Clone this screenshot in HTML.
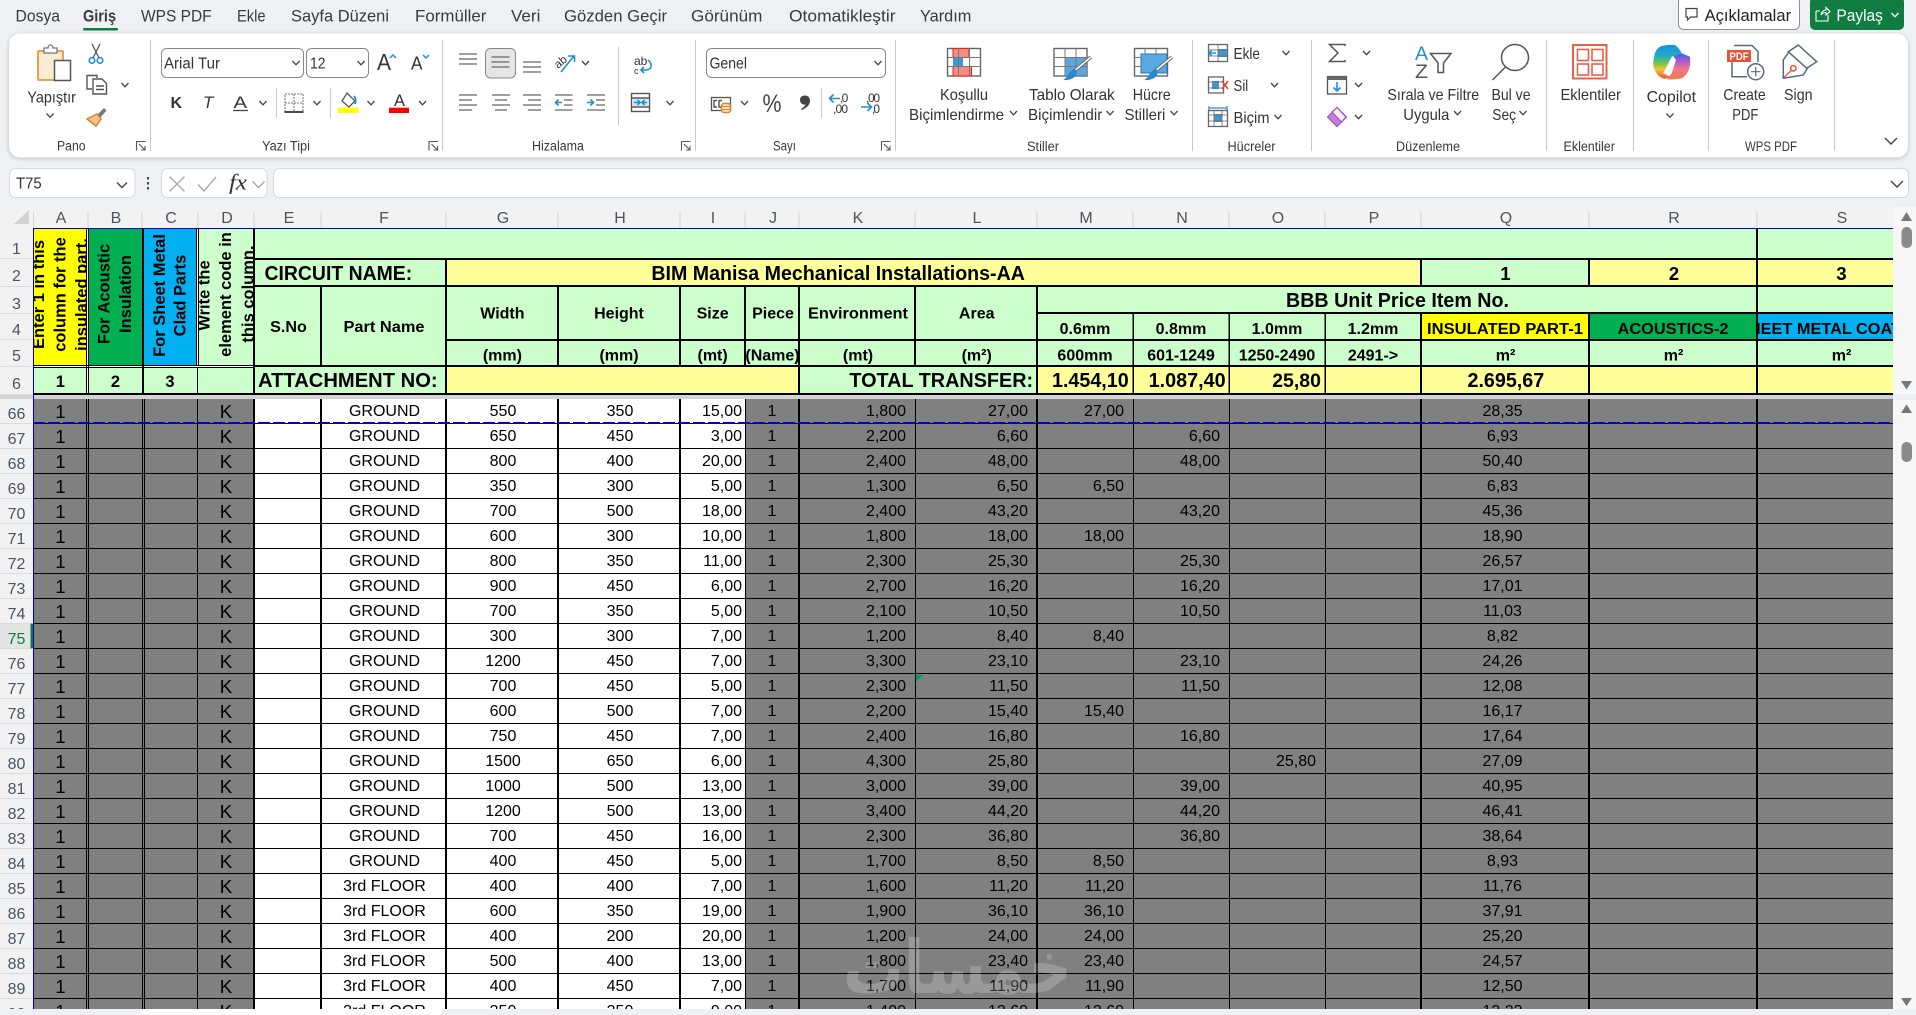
<!DOCTYPE html>
<html lang="tr"><head><meta charset="utf-8"><title>Excel</title>
<style>
html,body{margin:0;padding:0;width:1916px;height:1015px;overflow:hidden;background:#eef0f3}
svg{position:absolute;left:0;top:0}
text{font-family:"Liberation Sans",Arial,sans-serif;fill:#333;font-size:16px;white-space:pre}
.m{font-size:16.5px;fill:#3a3a3a}.g{font-size:13.5px;fill:#3a3a3a}
.h{fill:#4a5560;font-size:16px;text-anchor:middle}
.b{font-weight:bold;fill:#000;font-size:16px;text-anchor:middle}
.l{font-weight:bold;fill:#000;font-size:20px}
.i{fill:none;stroke:#555;stroke-width:1.4}.u{fill:none;stroke:#1e8fd5;stroke-width:1.6}
#w{position:absolute;left:33px;top:399px;width:1860px;height:610px;overflow:hidden}
table{border-collapse:separate;border-spacing:0;table-layout:fixed;width:1860px;font:16px/22px "Liberation Sans",Arial,sans-serif;color:#000}
td{padding:2px 0 0;height:22px;border-bottom:1px solid #000;text-align:center;overflow:hidden;white-space:nowrap}
td:nth-child(1),td:nth-child(4){font-size:18.7px}
td:nth-child(n+6):nth-child(-n+8){padding-left:2px}
td:nth-child(9){text-align:right;padding-right:3px}
td:nth-child(n+11):nth-child(-n+15){text-align:right;padding-right:9px}
td:nth-child(17){padding-right:5px}
</style></head><body>
<svg width="1916" height="1015" viewBox="0 0 1916 1015">
<defs>
<path id="c" d="M-3.5-2L0 1.8 3.5-2" fill="none" stroke="#444" stroke-width="1.3"/>
<path id="dl" d="M.5 9.5V.5H9.5M3 3L9 9M9 5V9H5" fill="none" stroke="#555" stroke-width="1.1"/>
<path id="gl" d="M0 0H18M0 5H18M0 10H18" fill="none" stroke="#666" stroke-width="1.3"/>
<clipPath id="ca"><rect x="33" y="229" width="53" height="136"/></clipPath>
<clipPath id="cb"><rect x="89" y="229" width="53" height="136"/></clipPath>
<clipPath id="cc"><rect x="144" y="229" width="52" height="136"/></clipPath>
<clipPath id="cd"><rect x="199" y="229" width="55" height="136"/></clipPath>
<clipPath id="cs"><rect x="1758" y="314" width="135" height="25"/></clipPath>
<clipPath id="cn"><rect x="746" y="341" width="53" height="24"/></clipPath>
<linearGradient id="g2" x1="0" y1="0" x2="0" y2="1"><stop offset="0" stop-color="#1a8fe0"/><stop offset=".35" stop-color="#22b0c0"/><stop offset=".55" stop-color="#7cc83c"/><stop offset=".72" stop-color="#f5c33b"/><stop offset="1" stop-color="#ee4f3a"/></linearGradient>
<linearGradient id="g3" x1="0" y1="0" x2="0" y2="1"><stop offset="0" stop-color="#2a6fd8"/><stop offset=".25" stop-color="#9a58d8"/><stop offset=".6" stop-color="#f0758c"/><stop offset="1" stop-color="#f07a4a"/></linearGradient>
</defs>

<!-- top bar -->
<text class="m" x="15.5" y="21.5" textLength="44.5" lengthAdjust="spacingAndGlyphs">Dosya</text>
<text class="m" x="83" y="21.5" textLength="33" lengthAdjust="spacingAndGlyphs" style="font-weight:bold">Giriş</text>
<rect x="83" y="28" width="35" height="2.5" rx="1" fill="#107c41"/>
<text class="m" x="141" y="21.5" textLength="70.6" lengthAdjust="spacingAndGlyphs">WPS PDF</text>
<text class="m" x="237" y="21.5" textLength="28.6" lengthAdjust="spacingAndGlyphs">Ekle</text>
<text class="m" x="291" y="21.5" textLength="98" lengthAdjust="spacingAndGlyphs">Sayfa Düzeni</text>
<text class="m" x="415" y="21.5" textLength="71.4" lengthAdjust="spacingAndGlyphs">Formüller</text>
<text class="m" x="511" y="21.5" textLength="29.4" lengthAdjust="spacingAndGlyphs">Veri</text>
<text class="m" x="564" y="21.5" textLength="103" lengthAdjust="spacingAndGlyphs">Gözden Geçir</text>
<text class="m" x="691" y="21.5" textLength="71.4" lengthAdjust="spacingAndGlyphs">Görünüm</text>
<text class="m" x="789" y="21.5" textLength="106.5" lengthAdjust="spacingAndGlyphs">Otomatikleştir</text>
<text class="m" x="920" y="21.5" textLength="51.4" lengthAdjust="spacingAndGlyphs">Yardım</text>

<rect x="1678.5" y="-3" width="121" height="32.5" rx="5" fill="#fff" stroke="#8f8f8f"/>
<path d="M1686 8.5H1697V17H1690.5L1687.5 20V17H1686Z" fill="none" stroke="#444" stroke-width="1.2"/>
<text class="m" x="1704.6" y="21" textLength="86.5" lengthAdjust="spacingAndGlyphs" style="fill:#222">Açıklamalar</text>
<rect x="1810" y="-3" width="94" height="33" rx="5" fill="#107c41"/>
<path d="M1816 11V21H1828V15M1816 11H1820M1821 15C1822 11 1824 10 1826 10V7.5L1830 11.5 1826 15V12.5C1824 12.5 1822 13 1821 15Z" fill="none" stroke="#fff" stroke-width="1.1"/>
<text class="m" x="1836.4" y="21" textLength="46.5" lengthAdjust="spacingAndGlyphs" style="fill:#fff">Paylaş</text>
<path d="M1891.5 13L1895 16.8 1898.500 13" fill="none" stroke="#fff" stroke-width="1.3"/>

<!-- ribbon -->
<rect x="9" y="33.500" width="1899" height="124" rx="11" fill="#fff" style="filter:drop-shadow(0 1px 2px rgba(0,0,0,.22))"/>
<g stroke="#c9c9c9" stroke-width="1">
<path d="M150.500 40V151M442.500 40V151M695.500 40V151M895.500 40V151M1192.500 40V151M1311.500 40V151M1546.500 40V151M1633.500 40V151M1708.500 40V151M1834.500 40V151M618.500 47V125M276.500 88V118M330.500 88V118M821.500 88V118"/></g>

<!-- clipboard -->
<rect x="38" y="51" width="25" height="29" rx="1" fill="#fbebd2" stroke="#e9a34a" stroke-width="2"/>
<path d="M44 52V48H48C48 44 53 44 53 48H57V53H44Z" fill="#fff" stroke="#777" stroke-width="1.3"/>
<rect x="54.500" y="60.500" width="16" height="20" fill="#fff" stroke="#555" stroke-width="1.5"/>
<text x="27.300" y="102.500" textLength="48.700" lengthAdjust="spacingAndGlyphs">Yapıştır</text>
<use href="#c" transform="translate(50 115.500)"/>
<path d="M92 44L99 58M100 44L93 58" stroke="#555" stroke-width="1.3" fill="none"/>
<circle cx="92" cy="60.500" r="2.800" fill="none" stroke="#1e8fd5" stroke-width="1.6"/><circle cx="100" cy="60.500" r="2.800" fill="none" stroke="#1e8fd5" stroke-width="1.6"/>
<path d="M92 89H87V75.500H97V78M93 79H102L106.500 83.500V94H93Z" class="i"/><path d="M96 86H104M96 89.500H104" class="i" stroke-width="1"/>
<use href="#c" transform="translate(125 85)"/>
<path d="M104 108L106.500 110.500 100 118 97 115Z" fill="#777"/><path d="M97 114L101 119 96 126 87 119 93 116Z" fill="#f5c38a" stroke="#d9822b" stroke-width="1.500"/>
<text class="g" x="57" y="150.500" textLength="28.600" lengthAdjust="spacingAndGlyphs">Pano</text>
<use href="#dl" transform="translate(136 141)"/>

<!-- font -->
<rect x="161.500" y="48.500" width="142" height="29" rx="5" fill="#fff" stroke="#888"/>
<text x="164" y="68.500" textLength="56" lengthAdjust="spacingAndGlyphs" style="font-size:15.500px">Arial Tur</text>
<use href="#c" transform="translate(296 63)"/>
<rect x="306.500" y="48.500" width="62" height="29" rx="5" fill="#fff" stroke="#888"/>
<text x="310" y="68.500" textLength="15.500" lengthAdjust="spacingAndGlyphs" style="font-size:15.500px">12</text>
<use href="#c" transform="translate(361 63)"/>
<text x="377" y="70" style="font-size:23px" textLength="14" lengthAdjust="spacingAndGlyphs">A</text>
<path d="M390 58L393 55 396 58" fill="none" stroke="#1e8fd5" stroke-width="1.500"/>
<text x="411" y="69.500" style="font-size:18px" textLength="11.500" lengthAdjust="spacingAndGlyphs">A</text>
<path d="M423 55L426 58 429 55" fill="none" stroke="#1e8fd5" stroke-width="1.500"/>
<text x="170.500" y="108" style="font-weight:bold;font-size:16px">K</text>
<text x="203" y="108" style="font-style:italic;font-size:17px;font-family:'Liberation Sans',sans-serif">T</text>
<text x="233.500" y="108" textLength="13.500" lengthAdjust="spacingAndGlyphs" style="font-size:17px">A</text>
<path d="M233 110.500H248" stroke="#444" stroke-width="1.300"/>
<use href="#c" transform="translate(263 103)"/>
<path d="M285 94H303V112H285ZM294 94V112M285 103H303" fill="none" stroke="#777" stroke-width="1.100" stroke-dasharray="2 1"/><path d="M284.500 112H303.500" stroke="#333" stroke-width="1.800"/>
<use href="#c" transform="translate(317 103)"/>
<path d="M347 93L355 101 349 107 342 101Z" fill="#fff" stroke="#555" stroke-width="1.300"/><path d="M354 96C356 98 356 101 355 104" fill="none" stroke="#1e8fd5" stroke-width="1.800"/>
<rect x="338" y="107.700" width="20.400" height="5.300" fill="#ffff00"/>
<use href="#c" transform="translate(371 103)"/>
<text x="394" y="106" textLength="11" lengthAdjust="spacingAndGlyphs" style="font-size:17px">A</text>
<rect x="389" y="107.700" width="20" height="5.300" fill="#ff0000"/>
<use href="#c" transform="translate(422.500 103)"/>
<text class="g" x="262" y="150.500" textLength="48" lengthAdjust="spacingAndGlyphs">Yazı Tipi</text>
<use href="#dl" transform="translate(428.500 141)"/>

<!-- alignment -->
<use href="#gl" transform="translate(459 54)"/>
<rect x="485.500" y="48.500" width="30" height="29.500" rx="5" fill="#e6e6e6" stroke="#888"/>
<use href="#gl" transform="translate(491.500 57)"/>
<use href="#gl" transform="translate(523 62)"/>
<text x="554" y="66" transform="rotate(-40 560 62)" style="font-size:11.500px">ab</text>
<path d="M561 72L574 56M568 56H574.500V62" class="u"/>
<use href="#c" transform="translate(585.500 63)"/>
<path d="M459 95H477M459 100H472M459 105H477M459 110H472" fill="none" stroke="#666" stroke-width="1.300"/>
<path d="M492 95H510M495 100H507M492 105H510M495 110H507" fill="none" stroke="#666" stroke-width="1.300"/>
<path d="M523 95H541M528 100H541M523 105H541M528 110H541" fill="none" stroke="#666" stroke-width="1.300"/>
<path d="M555 95H572.500M564 100H572.500M564 105H572.500M555 110H572.500" fill="none" stroke="#666" stroke-width="1.300"/><path d="M562 102.500H555.500M558.500 99.500L555.500 102.500 558.500 105.500" class="u"/>
<path d="M587 95H605M596 100H605M596 105H605M587 110H605" fill="none" stroke="#666" stroke-width="1.300"/><path d="M587 102.500H593.500M590.500 99.500L593.500 102.500 590.500 105.500" class="u"/>
<text x="634" y="65" style="font-size:12px">ab</text><text x="634" y="74" style="font-size:9px">c</text>
<path d="M648 60C653 64 652 70 646 70H641M644 67L641 70 644 73" class="u"/>
<rect x="631.500" y="93.500" width="18" height="18" class="i"/><path d="M631.500 98H649.500M631.500 107H649.500" class="i"/><rect x="633" y="99" width="15" height="7" fill="#cfe6f7"/><path d="M634 102.500H640M637.500 100L640 102.500 637.500 105M647 102.500H642M644.500 100L642 102.500 644.500 105" class="u" stroke-width="1.200"/>
<use href="#c" transform="translate(670 103)"/>
<text class="g" x="532" y="150.500" textLength="52" lengthAdjust="spacingAndGlyphs">Hizalama</text>
<use href="#dl" transform="translate(681 141)"/>

<!-- number -->
<rect x="706.500" y="48.500" width="179" height="29" rx="5" fill="#fff" stroke="#888"/>
<text x="709.500" y="68.500" textLength="37.500" lengthAdjust="spacingAndGlyphs" style="font-size:15.500px">Genel</text>
<use href="#c" transform="translate(878 63)"/>
<rect x="711.500" y="97.500" width="19" height="13" fill="#fff" stroke="#555" stroke-width="1.300"/><path d="M717 100.500H714V107H717M722 100.500H719V107H722" class="i" stroke-width="1"/>
<rect x="721.500" y="103.500" width="9" height="9" rx="2.500" fill="#fbe3c3" stroke="#d9822b" stroke-width="1.400"/><path d="M721.500 106.500H730.500M721.500 109.500H730.500" stroke="#d9822b"/>
<use href="#c" transform="translate(744.500 103)"/>
<text x="762.500" y="112" textLength="19" lengthAdjust="spacingAndGlyphs" style="font-size:25px;fill:#444">%</text>
<path d="M805 95.500C808.500 95.500 810 98 810 101C810 105 806 108.500 801.500 110L801 109C803.500 107.500 805 106 805.500 104.500C802.500 105 800 103 800 100C800 97 802 95.500 805 95.500Z" fill="#444"/>
<path d="M840 98.500H829.500M833.500 94.500L829.500 98.500 833.500 102.500" class="u"/>
<text x="840" y="102" style="font-size:12px" textLength="8.300">,0</text><text x="833" y="113" style="font-size:12px" textLength="15">,00</text>
<text x="866" y="102" style="font-size:12px" textLength="14">,00</text>
<path d="M861 107H871.500M867.500 103L871.500 107 867.500 111" class="u"/><text x="872" y="113" style="font-size:12px" textLength="8">,0</text>
<text class="g" x="773" y="150.500" textLength="23" lengthAdjust="spacingAndGlyphs">Sayı</text>
<use href="#dl" transform="translate(881 141)"/>

<!-- styles -->
<rect x="947.500" y="48.500" width="33" height="27.500" fill="#fff" stroke="#666" stroke-width="1.400"/>
<rect x="953" y="48.500" width="16" height="9" fill="#f28b82" stroke="#e02020"/><rect x="953" y="57.500" width="10" height="9" fill="#3f97d6"/><rect x="953" y="66.500" width="18.500" height="9.500" fill="#f28b82" stroke="#e02020"/>
<path d="M958.500 48V76M969.500 48V76M947.500 57.500H981M947.500 66.500H981" stroke="#777" fill="none"/>
<text x="940" y="100" textLength="48" lengthAdjust="spacingAndGlyphs">Koşullu</text>
<text x="909" y="120" textLength="95" lengthAdjust="spacingAndGlyphs">Biçimlendirme</text>
<use href="#c" transform="translate(1013.500 113)"/>
<rect x="1054" y="48.500" width="33" height="27.500" fill="#fff" stroke="#666" stroke-width="1.400"/>
<rect x="1065" y="57.500" width="22" height="18.500" fill="#3f97d6" opacity=".85"/>
<path d="M1065 48V76M1076 48V76M1054 57.500H1087M1054 66.500H1087" stroke="#777" fill="none"/>
<path d="M1091 57L1073 72" stroke="#666" stroke-width="3.500"/><path d="M1091 57L1073 72" stroke="#fff" stroke-width="1.600"/><path d="M1075 69C1079 72 1076 81 1063 80C1068 78 1068 71 1075 69Z" fill="#2a87c9"/>
<text x="1029" y="100" textLength="85.700" lengthAdjust="spacingAndGlyphs">Tablo Olarak</text>
<text x="1028" y="120" textLength="74.300" lengthAdjust="spacingAndGlyphs">Biçimlendir</text>
<use href="#c" transform="translate(1110 113)"/>
<rect x="1134.500" y="48.500" width="33" height="27.500" fill="#fff" stroke="#666" stroke-width="1.400"/>
<rect x="1141" y="54" width="26" height="19" fill="#5aa9e0" stroke="#1e78c0"/>
<path d="M1145 48V54M1156 48V54M1134.500 57.500H1141M1134.500 66.500H1141" stroke="#777" fill="none"/>
<path d="M1172 57L1154 72" stroke="#666" stroke-width="3.500"/><path d="M1172 57L1154 72" stroke="#fff" stroke-width="1.600"/><path d="M1156 69C1160 72 1157 81 1144 80C1149 78 1149 71 1156 69Z" fill="#2a87c9"/>
<text x="1132.700" y="100" textLength="38" lengthAdjust="spacingAndGlyphs">Hücre</text>
<text x="1124.500" y="120" textLength="40.800" lengthAdjust="spacingAndGlyphs">Stilleri</text>
<use href="#c" transform="translate(1174 113)"/>
<text class="g" x="1027" y="151" textLength="32" lengthAdjust="spacingAndGlyphs">Stiller</text>

<!-- cells -->
<rect x="1208.500" y="44.500" width="19" height="17" fill="#fff" stroke="#666" stroke-width="1.300"/><rect x="1218" y="49" width="9" height="8" fill="#3f97d6"/><path d="M1218 44V62M1208 50H1228M1208 56H1228" stroke="#666" fill="none" stroke-width=".8"/><path d="M1216 53H1209M1212 50L1209 53 1212 56" fill="#fff" stroke="#1e8fd5" stroke-width="1.500"/>
<text x="1233.500" y="59" textLength="26.500" lengthAdjust="spacingAndGlyphs">Ekle</text>
<use href="#c" transform="translate(1286 53)"/>
<rect x="1208.500" y="77" width="15" height="16" fill="#fff" stroke="#666" stroke-width="1.300"/><rect x="1212" y="81" width="7" height="8" fill="#3f97d6"/><path d="M1208 82H1224M1208 88H1224" stroke="#666" fill="none" stroke-width=".8"/><path d="M1222 81L1228 89M1228 81L1222 89" stroke="#e0483a" stroke-width="1.600"/>
<text x="1233.500" y="91" textLength="14.700" lengthAdjust="spacingAndGlyphs">Sil</text>
<use href="#c" transform="translate(1274.500 85)"/>
<rect x="1208.500" y="110.500" width="19" height="16" fill="#fff" stroke="#666" stroke-width="1.300"/><rect x="1214" y="114" width="8" height="8" fill="#3f97d6"/><path d="M1208 115H1228M1208 121H1228M1214 110V127M1222 110V127" stroke="#666" fill="none" stroke-width=".8"/><path d="M1209 108H1227M1209 106V110M1227 106V110" stroke="#1e8fd5" stroke-width="1.200" fill="none"/>
<text x="1233.500" y="123" textLength="36" lengthAdjust="spacingAndGlyphs">Biçim</text>
<use href="#c" transform="translate(1278 117)"/>
<text class="g" x="1227.500" y="151" textLength="48" lengthAdjust="spacingAndGlyphs">Hücreler</text>

<!-- editing -->
<path d="M1345 46V44.500H1329.500L1338 53 1329.500 61.500H1345V60" fill="none" stroke="#555" stroke-width="1.500"/>
<use href="#c" transform="translate(1366.500 53)"/>
<rect x="1327.500" y="76.500" width="19" height="17.500" fill="#fff" stroke="#555" stroke-width="1.300"/><rect x="1327.500" y="76.500" width="19" height="3.500" fill="#666"/><path d="M1337 82V91M1333.500 87.500L1337 91 1340.500 87.500" class="u"/>
<use href="#c" transform="translate(1358.500 85)"/>
<path d="M1337 107.500L1346.500 117 1337 126.500 1327.500 117Z" fill="#c77fd8" stroke="#a64fc0" stroke-width="1.200"/><path d="M1332 112L1341.500 122 1346 117 1337 107.500Z" fill="#fbeaf8" stroke="#a64fc0" stroke-width="1.200"/>
<use href="#c" transform="translate(1358.500 117)"/>
<text x="1415" y="60" textLength="13" lengthAdjust="spacingAndGlyphs" style="font-size:19px;fill:#1e8fd5">A</text>
<text x="1415" y="78" textLength="13" lengthAdjust="spacingAndGlyphs" style="font-size:19px;fill:#555">Z</text>
<path d="M1430.500 53.500H1451L1443.500 63V72.500H1438V63Z" fill="none" stroke="#555" stroke-width="1.500"/>
<text x="1387.400" y="100" textLength="91.800" lengthAdjust="spacingAndGlyphs">Sırala ve Filtre</text>
<text x="1403.300" y="120" textLength="46" lengthAdjust="spacingAndGlyphs">Uygula</text>
<use href="#c" transform="translate(1457.500 113)"/>
<ellipse cx="1515" cy="57.500" rx="13.500" ry="13" fill="none" stroke="#555" stroke-width="1.500"/><path d="M1505.500 67L1492.500 80" stroke="#555" stroke-width="1.500"/>
<text x="1491.500" y="100" textLength="39" lengthAdjust="spacingAndGlyphs">Bul ve</text>
<text x="1492.300" y="120" textLength="23.700" lengthAdjust="spacingAndGlyphs">Seç</text>
<use href="#c" transform="translate(1523 113)"/>
<text class="g" x="1396" y="151" textLength="64" lengthAdjust="spacingAndGlyphs">Düzenleme</text>

<!-- addins -->
<rect x="1573" y="45" width="33.500" height="33.500" fill="none" stroke="#e8604c" stroke-width="2"/>
<rect x="1577.500" y="49.500" width="11" height="11" fill="none" stroke="#e8604c" stroke-width="1.600"/><rect x="1592" y="49.500" width="11" height="11" fill="none" stroke="#e8604c" stroke-width="1.600"/><rect x="1577.500" y="64" width="11" height="11" fill="none" stroke="#e8604c" stroke-width="1.600"/><rect x="1592" y="64" width="11" height="11" fill="none" stroke="#e8604c" stroke-width="1.600"/>
<text x="1560.500" y="100" textLength="60.400" lengthAdjust="spacingAndGlyphs">Eklentiler</text>
<text class="g" x="1563.500" y="151" textLength="51.400" lengthAdjust="spacingAndGlyphs">Eklentiler</text>

<!-- copilot -->
<path d="M1681.700 53.300L1690 56.700C1690.500 62 1690 66 1689.300 68.300C1688 73 1685 76.500 1681.700 78.300C1677 79.500 1671 79.800 1666.700 79.300L1671.700 73.300L1676 60L1673.300 56Z" fill="url(#g3)"/>
<path d="M1660 46.700C1664 45 1670 44.500 1675 45C1678 47 1680 50 1681.700 53.300L1671.700 56.700L1663.300 73.300L1670 76.700L1665 79C1661 78 1658 76 1656.700 73.300C1654 70 1653 66 1653.300 63.300C1653.500 59 1654 56 1655 53.300C1656 50 1658 48 1660 46.700Z" fill="url(#g2)"/>
<text x="1646.600" y="102" textLength="49.400" lengthAdjust="spacingAndGlyphs">Copilot</text>
<use href="#c" transform="translate(1670 115.500)"/>

<!-- wps -->
<path d="M1732 62V76.700H1747M1734 45.500H1752L1758 51.500V62" fill="none" stroke="#5a6a7a" stroke-width="1.500"/>
<rect x="1727" y="50" width="24" height="12" fill="#e8503a"/>
<text x="1729.500" y="59.800" textLength="19" lengthAdjust="spacingAndGlyphs" style="font-size:11px;font-weight:bold;fill:#fff">PDF</text>
<circle cx="1755.700" cy="71.700" r="8" fill="#fff" stroke="#5a6a7a" stroke-width="1.500"/><path d="M1755.700 67V76.400M1751 71.700H1760.400" stroke="#5a6a7a" stroke-width="1.200"/>
<text x="1723.300" y="100" textLength="42.400" lengthAdjust="spacingAndGlyphs">Create</text>
<text x="1732.300" y="120" textLength="26" lengthAdjust="spacingAndGlyphs">PDF</text>
<path d="M1798.300 45L1816.700 61.700 1806.700 68.300 1788.300 51.700ZM1788.300 52.700L1783.300 60V78.300L1803.300 75 1808.300 66.700" fill="none" stroke="#5a6a7a" stroke-width="1.500"/>
<circle cx="1793.300" cy="68.300" r="2.700" fill="none" stroke="#e8503a" stroke-width="1.500"/><path d="M1791.500 70.300L1784 77.300" stroke="#e8503a" stroke-width="1.300"/>
<text x="1784" y="100" textLength="28.600" lengthAdjust="spacingAndGlyphs">Sign</text>
<text class="g" x="1745" y="151" textLength="52" lengthAdjust="spacingAndGlyphs">WPS PDF</text>
<path d="M1885 138L1891 144 1897 138" fill="none" stroke="#444" stroke-width="1.400"/>

<!-- formula bar -->
<rect x="9.500" y="168.500" width="125.500" height="29" rx="6" fill="#fff" stroke="#d8d8d8"/>
<text x="16" y="188.500" textLength="25.700" lengthAdjust="spacingAndGlyphs">T75</text>
<path d="M117 182.500L122 187.500 127 182.500" fill="none" stroke="#444" stroke-width="1.400"/>
<path d="M148 177V179.500M148 182V184.500M148 187V189.500" stroke="#444" stroke-width="2"/>
<rect x="161.500" y="168.500" width="105.500" height="29" rx="6" fill="#fff" stroke="#d8d8d8"/>
<path d="M169.500 176.500L184.500 191.500M184.500 176.500L169.500 191.500" stroke="#aaa" stroke-width="1.400"/>
<path d="M198 184.500L204 191 216 177" fill="none" stroke="#aaa" stroke-width="1.400"/>
<text x="229" y="189.500" textLength="18" lengthAdjust="spacingAndGlyphs" style="font:italic 22px 'Liberation Serif',serif;fill:#333">fx</text>
<path d="M252.500 181.500L258.500 187.500 264.500 181.500" fill="none" stroke="#999" stroke-width="1.200"/>
<rect x="273.500" y="168.500" width="1635" height="29" rx="6" fill="#fff" stroke="#d8d8d8"/>
<path d="M1891 181L1897 187 1903 181" fill="none" stroke="#444" stroke-width="1.400"/>

<!-- col/row headers -->
<rect x="0" y="207" width="1893" height="21" fill="#f2f2f2"/>
<rect x="0" y="228" width="33" height="781" fill="#f2f2f2"/>
<rect x="0" y="623" width="33" height="25" fill="#e4e4e4"/>
<path d="M14 224H29V210Z" fill="#d2d2d2"/>
<path d="M33.500 212V228M88 212V228M142 212V228M198 212V228M254 212V228M321 212V228M446 212V228M558 212V228M680 212V228M745 212V228M799 212V228M915 212V228M1037 212V228M1133 212V228M1229 212V228M1325 212V228M1421 212V228M1589 212V228M1757 212V228" stroke="#d4d4d4" fill="none"/>
<path d="M0 258.500H33M0 286.500H33M0 313.500H33M0 339.500H33M0 366.500H33M0 394.500H33M0 423.500H33M0 448.500H33M0 473.500H33M0 498.500H33M0 523.500H33M0 548.500H33M0 573.500H33M0 598.500H33M0 623.500H33M0 648.500H33M0 673.500H33M0 698.500H33M0 723.500H33M0 748.500H33M0 773.500H33M0 798.500H33M0 823.500H33M0 848.500H33M0 873.500H33M0 898.500H33M0 923.500H33M0 948.500H33M0 973.500H33M0 998.500H33" stroke="#dcdcdc" fill="none"/>
<g transform="translate(1 0)">
<text class="h" x="60" y="223">A</text><text class="h" x="115" y="223">B</text><text class="h" x="170" y="223">C</text><text class="h" x="226" y="223">D</text><text class="h" x="288" y="223">E</text><text class="h" x="383" y="223">F</text><text class="h" x="502" y="223">G</text><text class="h" x="619" y="223">H</text><text class="h" x="712" y="223">I</text><text class="h" x="772" y="223">J</text><text class="h" x="857" y="223">K</text><text class="h" x="976" y="223">L</text><text class="h" x="1085" y="223">M</text><text class="h" x="1181" y="223">N</text><text class="h" x="1277" y="223">O</text><text class="h" x="1373" y="223">P</text><text class="h" x="1505" y="223">Q</text><text class="h" x="1673" y="223">R</text><text class="h" x="1841" y="223">S</text>
</g>
<g transform="translate(.5 0)">
<text class="h" x="16" y="254">1</text><text class="h" x="16" y="281">2</text><text class="h" x="16" y="309">3</text><text class="h" x="16" y="335">4</text><text class="h" x="16" y="361">5</text><text class="h" x="16" y="389">6</text>
<text class="h" x="16" y="419">66</text><text class="h" x="16" y="444">67</text><text class="h" x="16" y="469">68</text><text class="h" x="16" y="494">69</text><text class="h" x="16" y="519">70</text><text class="h" x="16" y="544">71</text><text class="h" x="16" y="569">72</text><text class="h" x="16" y="594">73</text><text class="h" x="16" y="619">74</text><text class="h" x="16" y="644" style="fill:#107c41">75</text><text class="h" x="16" y="669">76</text><text class="h" x="16" y="694">77</text><text class="h" x="16" y="719">78</text><text class="h" x="16" y="744">79</text><text class="h" x="16" y="769">80</text><text class="h" x="16" y="794">81</text><text class="h" x="16" y="819">82</text><text class="h" x="16" y="844">83</text><text class="h" x="16" y="869">84</text><text class="h" x="16" y="894">85</text><text class="h" x="16" y="919">86</text><text class="h" x="16" y="944">87</text><text class="h" x="16" y="969">88</text><text class="h" x="16" y="994">89</text><text class="h" x="16" y="1019">90</text>
</g>
<rect x="30.500" y="623.500" width="2.500" height="25" fill="#107c41"/>

<!-- frozen header fills -->
<rect x="33" y="229" width="221" height="165" fill="#fff"/>
<rect x="33" y="229" width="53" height="136" fill="#ffff00"/>
<rect x="89" y="229" width="53" height="136" fill="#00b050"/>
<rect x="144" y="229" width="52" height="136" fill="#00b0f0"/>
<rect x="199" y="229" width="55" height="136" fill="#ccffcc"/>
<rect x="33" y="368" width="53" height="26" fill="#ccffcc"/>
<rect x="89" y="368" width="53" height="26" fill="#ccffcc"/>
<rect x="144" y="368" width="53" height="26" fill="#ccffcc"/>
<rect x="198" y="368" width="56" height="26" fill="#ccffcc"/>
<rect x="254" y="229" width="1639" height="165" fill="#ccffcc"/>
<rect x="446" y="259" width="975" height="27" fill="#ffff99"/>
<rect x="1589" y="259" width="304" height="27" fill="#ffff99"/>
<rect x="446" y="366" width="353" height="28" fill="#ffff99"/>
<rect x="1037" y="366" width="856" height="28" fill="#ffff99"/>
<rect x="1421" y="313" width="168" height="27" fill="#ffff00"/>
<rect x="1589" y="313" width="168" height="27" fill="#00b050"/>
<rect x="1757" y="313" width="136" height="27" fill="#00b0f0"/>
<rect x="33" y="394" width="1860" height="5" fill="#d4d4d4"/>
<rect x="0" y="395" width="33" height="4" fill="#d4d4d4"/>

<!-- rotated text -->
<g clip-path="url(#ca)">
<text class="b" transform="translate(44 294.500) rotate(-90)" style="font-size:16.500px">Enter 1 in this</text>
<text class="b" transform="translate(65.700 294.500) rotate(-90)" style="font-size:16.500px">column for the</text>
<text class="b" transform="translate(87 294.500) rotate(-90)" style="font-size:16.500px">insulated part.</text>
</g>
<g clip-path="url(#cb)">
<text class="b" transform="translate(109.300 294) rotate(-90)" style="font-size:16.500px">For Acoustic</text>
<text class="b" transform="translate(131 294) rotate(-90)" style="font-size:16.500px">Insulation</text>
</g>
<g clip-path="url(#cc)">
<text class="b" transform="translate(165 295.500) rotate(-90)" style="font-size:16.500px">For Sheet Metal</text>
<text class="b" transform="translate(185.700 295.500) rotate(-90)" style="font-size:16.500px">Clad Parts</text>
</g>
<g clip-path="url(#cd)">
<text class="b" transform="translate(209.300 295.500) rotate(-90)" style="font-size:16.500px">Write the</text>
<text class="b" transform="translate(231 294.500) rotate(-90)" style="font-size:16.500px">element code in</text>
<text class="b" transform="translate(253.300 294) rotate(-90)" style="font-size:16.500px">this column.</text>
</g>

<!-- header text -->
<text class="l" x="264.500" y="280" textLength="147.700" lengthAdjust="spacingAndGlyphs">CIRCUIT NAME:</text>
<text class="l" x="651.400" y="280" textLength="373.500" lengthAdjust="spacingAndGlyphs">BIM Manisa Mechanical Installations-AA</text>
<text class="b" x="1505.500" y="280" style="font-size:18.700px">1</text><text class="b" x="1674" y="280" style="font-size:18.700px">2</text><text class="b" x="1841.500" y="280" style="font-size:18.700px">3</text>
<text class="b" x="288.500" y="332" textLength="36.700" lengthAdjust="spacingAndGlyphs">S.No</text>
<text class="b" x="384" y="332" textLength="81" lengthAdjust="spacingAndGlyphs">Part Name</text>
<text class="b" x="502.400" y="318.500">Width</text><text class="b" x="619" y="318.500">Height</text><text class="b" x="712.600" y="318.500">Size</text><text class="b" x="773" y="318.500">Piece</text><text class="b" x="858" y="318.500" textLength="100" lengthAdjust="spacingAndGlyphs">Environment</text><text class="b" x="976.700" y="318.500">Area</text>
<text class="b" x="502.400" y="360.500">(mm)</text><text class="b" x="619" y="360.500">(mm)</text><text class="b" x="712.600" y="360.500">(mt)</text>
<g clip-path="url(#cn)"><text class="b" x="772.500" y="360.500">(Name)</text></g>
<text class="b" x="858" y="360.500">(mt)</text><text class="b" x="976.700" y="360.500">(m²)</text>
<text class="l" x="1286" y="307" textLength="223" lengthAdjust="spacingAndGlyphs">BBB Unit Price Item No.</text>
<text class="b" x="1085" y="334">0.6mm</text><text class="b" x="1181" y="334">0.8mm</text><text class="b" x="1277" y="334">1.0mm</text><text class="b" x="1373" y="334">1.2mm</text>
<text class="b" x="1505" y="334" textLength="156" lengthAdjust="spacingAndGlyphs">INSULATED PART-1</text>
<text class="b" x="1673" y="334" textLength="111" lengthAdjust="spacingAndGlyphs">ACOUSTICS-2</text>
<g clip-path="url(#cs)"><text class="b" x="1738" y="334" textLength="192" lengthAdjust="spacingAndGlyphs" style="text-anchor:start">SHEET METAL COATING</text></g>
<text class="b" x="1085" y="360.500">600mm</text><text class="b" x="1181" y="360.500">601-1249</text><text class="b" x="1277" y="360.500">1250-2490</text><text class="b" x="1373" y="360.500">2491-&gt;</text><text class="b" x="1505.500" y="360.500">m²</text><text class="b" x="1673.500" y="360.500">m²</text><text class="b" x="1841.500" y="360.500">m²</text>
<text class="b" x="60.400" y="387" style="font-size:16.500px">1</text><text class="b" x="115.500" y="387" style="font-size:16.500px">2</text><text class="b" x="170" y="387" style="font-size:16.500px">3</text>
<text class="l" x="258" y="387" textLength="179.600" lengthAdjust="spacingAndGlyphs">ATTACHMENT NO:</text>
<text class="l" x="849.400" y="387" textLength="183.700" lengthAdjust="spacingAndGlyphs">TOTAL TRANSFER:</text>
<text class="l" x="1052" y="387" textLength="76.700" lengthAdjust="spacingAndGlyphs">1.454,10</text>
<text class="l" x="1148.600" y="387" textLength="77" lengthAdjust="spacingAndGlyphs">1.087,40</text>
<text class="l" x="1321" y="387" style="text-anchor:end;font-size:19.500px">25,80</text>
<text class="l" x="1467.500" y="387" textLength="76.700" lengthAdjust="spacingAndGlyphs">2.695,67</text>

<!-- header lines -->
<g stroke="#000" stroke-width="2" fill="none" shape-rendering="crispEdges">
<path d="M254 259H1893M254 286H1893M1037 313H1893M446 340H1893M254 366H1893M33 394H1893"/>
<path d="M254 229V394M446 259V394M321 286V366M558 286V366M680 286V366M745 286V366M799 286V394M915 286V366M1037 286V394M1421 259V286M1421 313V394M1589 259V286M1589 313V394M1757 229V394"/>
<path d="M1133 313V394M1229 313V394M1325 313V394" stroke-width="1.500"/>
</g>
<g stroke="#000" stroke-width="1" fill="none" shape-rendering="crispEdges">
<path d="M86.500 229V394M88.500 229V394M142.500 229V394M143.500 229V394M196.500 229V366M198.500 229V366M197.500 368V394M33 365.500H254M33 367.500H254"/>
</g>
<path d="M33 228.500H1893M33.500 228V399" stroke="#0000c8" stroke-width="1" fill="none"/>

<!-- scrollbars -->
<rect x="1893" y="207" width="23" height="187" fill="#f7f7f8"/>
<rect x="1893" y="400" width="23" height="609" fill="#f7f7f8"/>
<path d="M1906.500 212L1912 221H1901ZM1906.500 389.500L1912 381H1901ZM1906.500 404.500L1912 413H1901ZM1906.500 1006L1912 998H1901Z" fill="#777"/>
<rect x="1901.500" y="227" width="10.500" height="21" rx="5" fill="#8a8a8a"/>
<rect x="1901.500" y="442" width="10.500" height="20" rx="5" fill="#8a8a8a"/>

<!-- bottom -->
<rect x="0" y="1009" width="1916" height="6" fill="#eef0f3"/>
<rect x="140" y="1009" width="301" height="6" fill="#fff"/>
</svg>

<div id="w"><table>
<colgroup><col style="width:55px;background:#808080"><col style="width:54px;background:#808080"><col style="width:56px;background:#808080"><col style="width:56px;background:#808080"><col style="width:67px;background:#fff"><col style="width:125px;background:#fff"><col style="width:112px;background:#fff"><col style="width:122px;background:#fff"><col style="width:65px;background:#fff"><col style="width:54px;background:#808080"><col style="width:116px;background:#808080"><col style="width:122px;background:#808080"><col style="width:96px;background:#808080"><col style="width:96px;background:#808080"><col style="width:96px;background:#808080"><col style="width:96px;background:#808080"><col style="width:168px;background:#808080"><col style="width:168px;background:#808080"><col style="width:136px;background:#808080"></colgroup>
<tr><td>1<td><td><td>K<td><td>GROUND<td>550<td>350<td>15,00<td>1<td>1,800<td>27,00<td>27,00<td><td><td><td>28,35<td><td></tr>
<tr><td>1<td><td><td>K<td><td>GROUND<td>650<td>450<td>3,00<td>1<td>2,200<td>6,60<td><td>6,60<td><td><td>6,93<td><td></tr>
<tr><td>1<td><td><td>K<td><td>GROUND<td>800<td>400<td>20,00<td>1<td>2,400<td>48,00<td><td>48,00<td><td><td>50,40<td><td></tr>
<tr><td>1<td><td><td>K<td><td>GROUND<td>350<td>300<td>5,00<td>1<td>1,300<td>6,50<td>6,50<td><td><td><td>6,83<td><td></tr>
<tr><td>1<td><td><td>K<td><td>GROUND<td>700<td>500<td>18,00<td>1<td>2,400<td>43,20<td><td>43,20<td><td><td>45,36<td><td></tr>
<tr><td>1<td><td><td>K<td><td>GROUND<td>600<td>300<td>10,00<td>1<td>1,800<td>18,00<td>18,00<td><td><td><td>18,90<td><td></tr>
<tr><td>1<td><td><td>K<td><td>GROUND<td>800<td>350<td>11,00<td>1<td>2,300<td>25,30<td><td>25,30<td><td><td>26,57<td><td></tr>
<tr><td>1<td><td><td>K<td><td>GROUND<td>900<td>450<td>6,00<td>1<td>2,700<td>16,20<td><td>16,20<td><td><td>17,01<td><td></tr>
<tr><td>1<td><td><td>K<td><td>GROUND<td>700<td>350<td>5,00<td>1<td>2,100<td>10,50<td><td>10,50<td><td><td>11,03<td><td></tr>
<tr><td>1<td><td><td>K<td><td>GROUND<td>300<td>300<td>7,00<td>1<td>1,200<td>8,40<td>8,40<td><td><td><td>8,82<td><td></tr>
<tr><td>1<td><td><td>K<td><td>GROUND<td>1200<td>450<td>7,00<td>1<td>3,300<td>23,10<td><td>23,10<td><td><td>24,26<td><td></tr>
<tr><td>1<td><td><td>K<td><td>GROUND<td>700<td>450<td>5,00<td>1<td>2,300<td>11,50<td><td>11,50<td><td><td>12,08<td><td></tr>
<tr><td>1<td><td><td>K<td><td>GROUND<td>600<td>500<td>7,00<td>1<td>2,200<td>15,40<td>15,40<td><td><td><td>16,17<td><td></tr>
<tr><td>1<td><td><td>K<td><td>GROUND<td>750<td>450<td>7,00<td>1<td>2,400<td>16,80<td><td>16,80<td><td><td>17,64<td><td></tr>
<tr><td>1<td><td><td>K<td><td>GROUND<td>1500<td>650<td>6,00<td>1<td>4,300<td>25,80<td><td><td>25,80<td><td>27,09<td><td></tr>
<tr><td>1<td><td><td>K<td><td>GROUND<td>1000<td>500<td>13,00<td>1<td>3,000<td>39,00<td><td>39,00<td><td><td>40,95<td><td></tr>
<tr><td>1<td><td><td>K<td><td>GROUND<td>1200<td>500<td>13,00<td>1<td>3,400<td>44,20<td><td>44,20<td><td><td>46,41<td><td></tr>
<tr><td>1<td><td><td>K<td><td>GROUND<td>700<td>450<td>16,00<td>1<td>2,300<td>36,80<td><td>36,80<td><td><td>38,64<td><td></tr>
<tr><td>1<td><td><td>K<td><td>GROUND<td>400<td>450<td>5,00<td>1<td>1,700<td>8,50<td>8,50<td><td><td><td>8,93<td><td></tr>
<tr><td>1<td><td><td>K<td><td>3rd FLOOR<td>400<td>400<td>7,00<td>1<td>1,600<td>11,20<td>11,20<td><td><td><td>11,76<td><td></tr>
<tr><td>1<td><td><td>K<td><td>3rd FLOOR<td>600<td>350<td>19,00<td>1<td>1,900<td>36,10<td>36,10<td><td><td><td>37,91<td><td></tr>
<tr><td>1<td><td><td>K<td><td>3rd FLOOR<td>400<td>200<td>20,00<td>1<td>1,200<td>24,00<td>24,00<td><td><td><td>25,20<td><td></tr>
<tr><td>1<td><td><td>K<td><td>3rd FLOOR<td>500<td>400<td>13,00<td>1<td>1,800<td>23,40<td>23,40<td><td><td><td>24,57<td><td></tr>
<tr><td>1<td><td><td>K<td><td>3rd FLOOR<td>400<td>450<td>7,00<td>1<td>1,700<td>11,90<td>11,90<td><td><td><td>12,50<td><td></tr>
<tr><td>1<td><td><td>K<td><td>3rd FLOOR<td>350<td>350<td>9,00<td>1<td>1,400<td>12,60<td>12,60<td><td><td><td>13,23<td><td></tr>
</table></div>

<svg width="1916" height="1015" viewBox="0 0 1916 1015" style="pointer-events:none">
<g stroke="#000" fill="none" shape-rendering="crispEdges">
<path d="M254 399V1009M321 399V1009M446 399V1009M558 399V1009M680 399V1009M799 399V1009M1037 399V1009M1421 399V1009M1589 399V1009M1757 399V1009" stroke-width="2"/>
<path d="M86.500 399V1009M88.500 399V1009M142.500 399V1009M144.500 399V1009M197.500 399V1009M745.500 399V1009M915.500 399V1009M1133.500 399V1009M1229.500 399V1009M1325.500 399V1009" stroke-width="1"/>
</g>
<path d="M33.500 399V1009" stroke="#0000c8" fill="none"/>
<path d="M916 675H923L916 682Z" fill="#00a050"/>
<path d="M33 423H1893" stroke="#0000c8" stroke-width="2" stroke-dasharray="12 3" fill="none"/>
<text x="843" y="993" textLength="229" lengthAdjust="spacingAndGlyphs" style="font-family:'DejaVu Sans',sans-serif;font-weight:bold;font-size:74px;fill:#fff;opacity:.2">خمسات</text>
</svg>
</body></html>
